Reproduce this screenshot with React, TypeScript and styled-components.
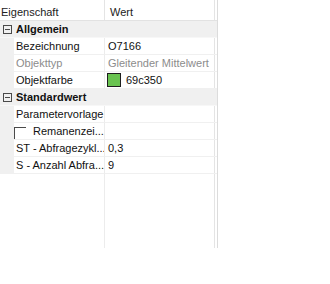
import React from "react";
import styled, { createGlobalStyle } from "styled-components";

const Global = createGlobalStyle`
  html, body { margin: 0; padding: 0; background: #ffffff; }
  body { font-family: "Liberation Sans", Arial, sans-serif; }
`;

const Grid = styled.div`
  width: 218px;
  height: 248px;
  display: flex;
  flex-direction: column;
  border-right: 1px solid #dcdcdc;
  box-shadow: inset -2px 0 0 #ffffff, inset -3px 0 0 #e4e4e4;
  box-sizing: border-box;
  font-size: 11px;
  color: #111;
`;

const Header = styled.div`
  display: grid;
  grid-template-columns: 105px 1fr;
  height: 21px;
  border-bottom: 1px solid #e2e2e2;
  box-sizing: border-box;
`;

const HeadCell = styled.div<{ $pad: number; $divider?: boolean }>`
  display: flex;
  align-items: center;
  padding-left: ${(p) => p.$pad}px;
  padding-top: 3px;
  border-right: ${(p) => (p.$divider ? "1px solid #e4e4e4" : "none")};
  white-space: nowrap;
  overflow: hidden;
  color: #222;
`;

const GroupRow = styled.div`
  display: flex;
  align-items: center;
  height: 17px;
  background: #f0f0f0;
  font-weight: 700;
  border-bottom: 1px solid #f7f7f7;
  box-sizing: border-box;
`;

const Toggle = styled.span`
  width: 14px;
  display: flex;
  justify-content: center;
  align-items: center;
  flex: none;
`;

const MinusBox = styled.span`
  width: 7px;
  height: 7px;
  border: 1px solid #4a4a4a;
  position: relative;
  box-sizing: content-box;
  &::after {
    content: "";
    position: absolute;
    left: 1px;
    right: 1px;
    top: 3px;
    height: 1px;
    background: #4a4a4a;
  }
`;

const GroupLabel = styled.span`
  padding-left: 2px;
`;

const Row = styled.div`
  display: grid;
  grid-template-columns: 14px 91px 1fr;
  height: 17px;
  box-sizing: border-box;
`;

const Margin = styled.div`
  background: #f0f0f0;
`;

const NameCell = styled.div<{ $muted?: boolean }>`
  display: flex;
  align-items: center;
  padding-left: 2px;
  border-right: 1px solid #ececec;
  border-bottom: 1px solid #f0f0f0;
  white-space: nowrap;
  overflow: hidden;
  color: ${(p) => (p.$muted ? "#8c8c8c" : "#111")};
`;

const ValueCell = styled.div<{ $muted?: boolean }>`
  display: flex;
  align-items: center;
  gap: 5px;
  padding-left: 3px;
  border-bottom: 1px solid #f0f0f0;
  white-space: nowrap;
  overflow: hidden;
  color: ${(p) => (p.$muted ? "#8c8c8c" : "#111")};
`;

const Swatch = styled.span<{ $color: string }>`
  width: 12px;
  height: 12px;
  margin-left: -1px;
  background: ${(p) => p.$color};
  border: 1px solid #1e1e1e;
  flex: none;
`;

const CheckBox = styled.span`
  width: 11px;
  height: 14px;
  border-top: 1px solid #4a4a4a;
  border-left: 1px solid #4a4a4a;
  margin-right: 7px;
  margin-left: -2px;
  margin-top: 4px;
  flex: none;
  align-self: flex-start;
`;

const Filler = styled.div`
  flex: 1;
  display: grid;
  grid-template-columns: 105px 1fr;
`;

const FillerCol = styled.div<{ $divider?: boolean }>`
  border-right: ${(p) => (p.$divider ? "1px solid #ececec" : "none")};
`;

type Item = {
  name: string;
  value?: string;
  muted?: boolean;
  swatch?: string;
  check?: boolean;
};

const groups: { title: string; items: Item[] }[] = [
  {
    title: "Allgemein",
    items: [
      { name: "Bezeichnung", value: "O7166" },
      { name: "Objekttyp", value: "Gleitender Mittelwert", muted: true },
      { name: "Objektfarbe", value: "69c350", swatch: "#69c350" },
    ],
  },
  {
    title: "Standardwert",
    items: [
      { name: "Parametervorlage" },
      { name: "Remanenzei...", check: true },
      { name: "ST - Abfragezykl...", value: "0,3" },
      { name: "S - Anzahl Abfra...", value: "9" },
    ],
  },
];

export default function App() {
  return (
    <>
      <Global />
      <Grid>
        <Header>
          <HeadCell $pad={1} $divider>
            Eigenschaft
          </HeadCell>
          <HeadCell $pad={5}>Wert</HeadCell>
        </Header>
        {groups.map((g) => (
          <React.Fragment key={g.title}>
            <GroupRow>
              <Toggle>
                <MinusBox />
              </Toggle>
              <GroupLabel>{g.title}</GroupLabel>
            </GroupRow>
            {g.items.map((it) => (
              <Row key={it.name}>
                <Margin />
                <NameCell $muted={it.muted}>
                  {it.check && <CheckBox />}
                  {it.name}
                </NameCell>
                <ValueCell $muted={it.muted}>
                  {it.swatch && <Swatch $color={it.swatch} />}
                  {it.value}
                </ValueCell>
              </Row>
            ))}
          </React.Fragment>
        ))}
        <Filler>
          <FillerCol $divider />
          <FillerCol />
        </Filler>
      </Grid>
    </>
  );
}
